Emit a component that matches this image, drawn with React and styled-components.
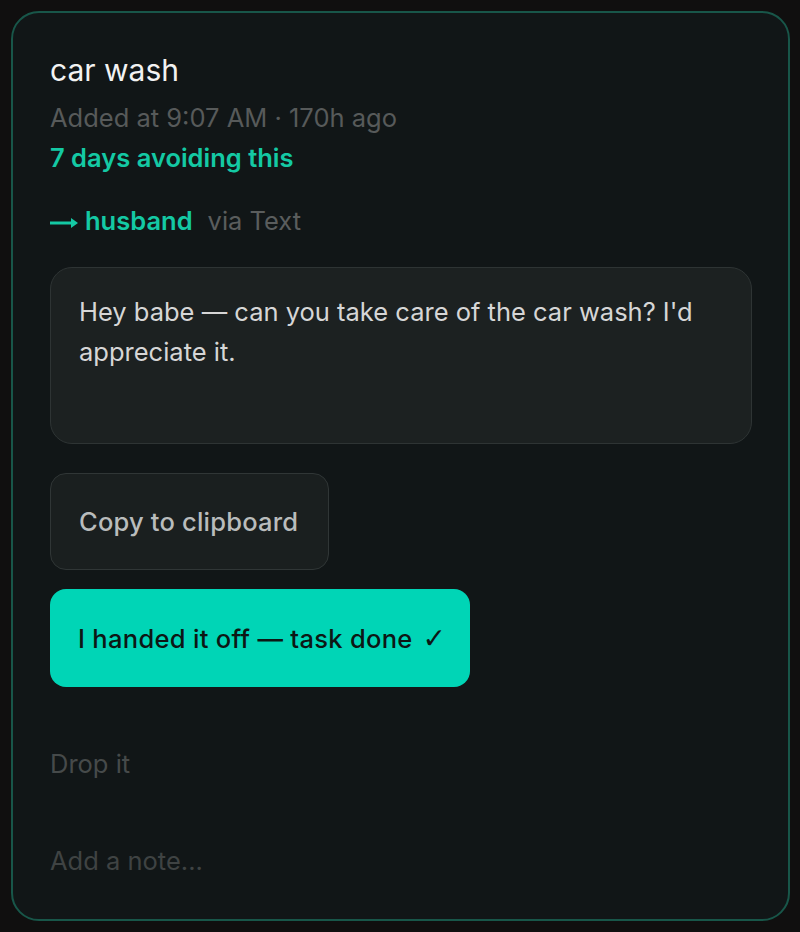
import React from 'react';
import styled, { createGlobalStyle } from 'styled-components';

const GlobalStyle = createGlobalStyle`
  html, body {
    margin: 0;
    padding: 0;
    background: #100f0f;
  }
  body {
    font-family: Inter, "Noto Sans", sans-serif;
    -webkit-font-smoothing: antialiased;
  }
`;

const Page = styled.div`
  padding: 11px 10px 11px 11px;
`;

const Card = styled.div`
  box-sizing: border-box;
  min-height: 910px;
  background: #111617;
  border: 2px solid #185649;
  border-radius: 28px;
  padding: 41px 36px 43px 37px;
  display: flex;
  flex-direction: column;
  align-items: flex-start;
`;

const Title = styled.div`
  font-size: 30px;
  line-height: 32px;
  color: #f2f2f2;
  font-weight: 400;
`;

const Meta = styled.div`
  margin-top: 17px;
  font-size: 25.5px;
  line-height: 30px;
  color: #575a5a;
`;

const Streak = styled.div`
  margin-top: 10px;
  font-size: 25.5px;
  line-height: 30px;
  font-weight: 600;
  color: #14c9a4;
`;

const Recipient = styled.div`
  margin-top: 33px;
  display: flex;
  align-items: center;
  font-size: 25.5px;
  line-height: 30px;
`;

const Arrow = styled.svg`
  width: 29px;
  height: 12px;
  margin-top: 3px;
  margin-right: 6px;
  color: #14c9a4;
`;

const Who = styled.span`
  color: #14c9a4;
  font-weight: 600;
  margin-right: 15px;
`;

const Via = styled.span`
  color: #5a5d5d;
`;

const Message = styled.div`
  box-sizing: border-box;
  margin-top: 31px;
  width: 100%;
  height: 177px;
  padding: 24px 28px;
  background: #1c2121;
  border: 1px solid #2e3434;
  border-radius: 22px;
  font-size: 25.5px;
  line-height: 40px;
  color: #d6d6d6;
`;

const Button = styled.button`
  box-sizing: border-box;
  font-family: inherit;
  font-size: 25.5px;
  font-weight: 500;
  border-radius: 16px;
  padding: 0 28px;
  cursor: pointer;
  text-align: left;
`;

const CopyButton = styled(Button)`
  margin-top: 29px;
  height: 97px;
  padding-right: 30px;
  background: #1a1f1f;
  border: 1px solid #303636;
  color: #b9bcbc;
  letter-spacing: 0.2px;
`;

const DoneButton = styled(Button)`
  margin-top: 19px;
  height: 98px;
  padding-right: 24px;
  background: #00d5b6;
  border: none;
  color: #0d1715;
  letter-spacing: 0.3px;
`;

const Check = styled.span`
  font-family: "DejaVu Sans", sans-serif;
  font-size: 28px;
  font-weight: 700;
  margin-left: 10px;
`;

const LinkText = styled.div`
  margin-top: ${p => p.$gap}px;
  font-size: 25.5px;
  line-height: 30px;
  color: #464a4a;
`;

const NoteInput = styled.input`
  margin-top: 67px;
  padding: 0;
  width: 100%;
  background: transparent;
  border: none;
  outline: none;
  font-family: inherit;
  font-size: 25.5px;
  line-height: 30px;
  height: 30px;
  color: #cfcfcf;
  &::placeholder {
    color: #3f4343;
  }
`;

export default function App() {
  return (
    <>
      <GlobalStyle />
      <Page>
        <Card>
          <Title>car wash</Title>
          <Meta>Added at 9:07 AM · 170h ago</Meta>
          <Streak>7 days avoiding this</Streak>
          <Recipient>
            <Arrow viewBox="0 0 29 12" fill="none">
              <path d="M0 6H24" stroke="currentColor" strokeWidth="3" />
              <path d="M21 1L28 6L21 11Z" fill="currentColor" />
            </Arrow>
            <Who>husband</Who>
            <Via>via Text</Via>
          </Recipient>
          <Message>
            Hey babe — can you take care of the car wash? I'd appreciate it.
          </Message>
          <CopyButton>Copy to clipboard</CopyButton>
          <DoneButton>
            I handed it off — task done<Check>✓</Check>
          </DoneButton>
          <LinkText $gap={62}>Drop it</LinkText>
          <NoteInput placeholder="Add a note..." />
        </Card>
      </Page>
    </>
  );
}
